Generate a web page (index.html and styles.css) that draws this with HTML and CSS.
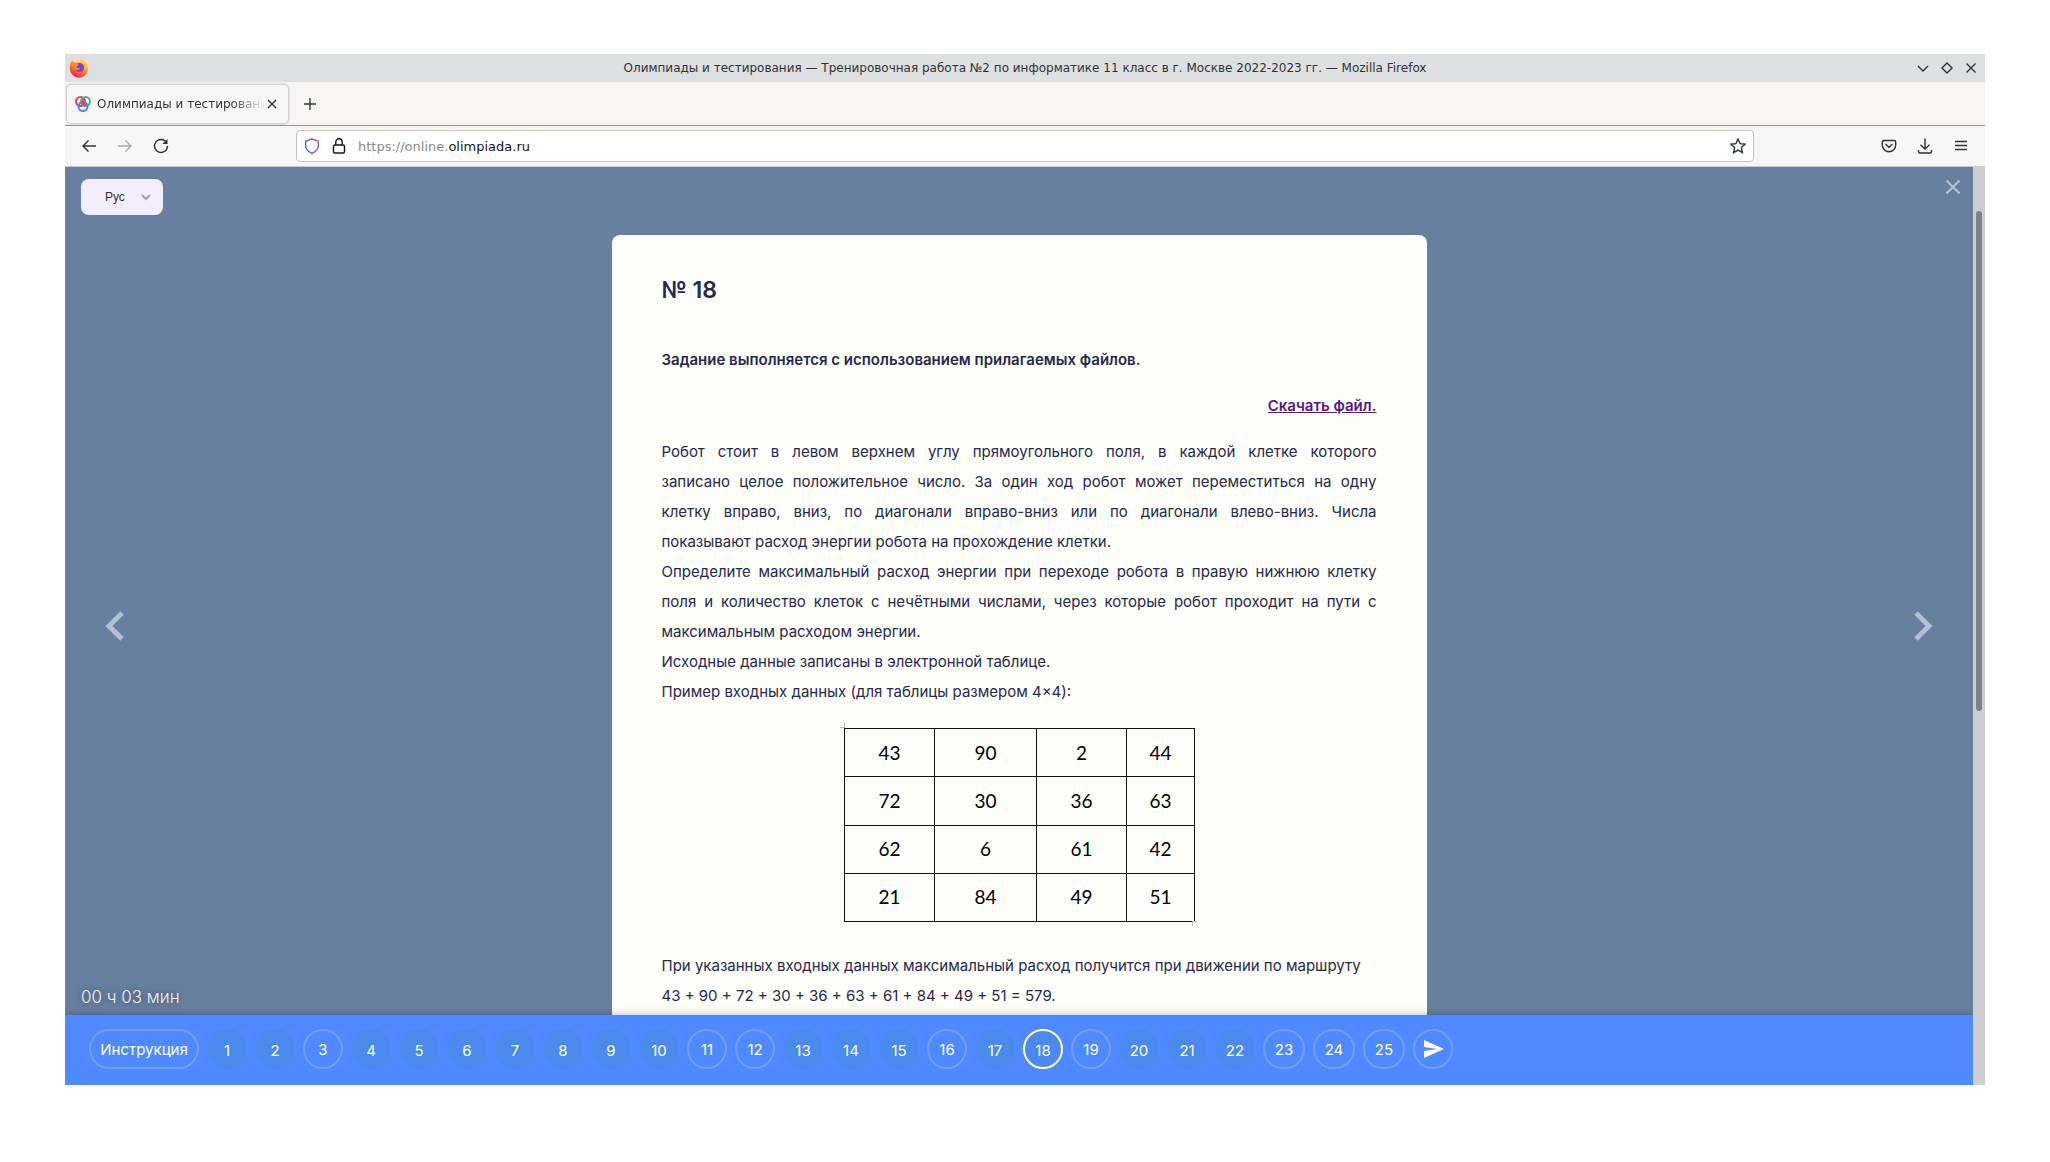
FILE: index.html
```html
<!DOCTYPE html>
<html lang="ru">
<head>
<meta charset="utf-8">
<title>Олимпиады и тестирования</title>
<link rel="stylesheet" href="styles.css">
</head>
<body>
<div class="window">
  <header class="titlebar">
    <svg class="firefox" viewBox="0 0 20 20" width="20" height="20" aria-hidden="true">
      <defs>
        <linearGradient id="flame" x1="0.8" y1="0" x2="0.3" y2="1">
          <stop offset="0" stop-color="#fff04a"/><stop offset="0.35" stop-color="#ffb52b"/>
          <stop offset="0.65" stop-color="#ff6a2b"/><stop offset="1" stop-color="#f0146a"/>
        </linearGradient>
      </defs>
      <path fill="url(#flame)" d="M2.600 3C1 5 .8 8 .8 10.500A9.200 9.200 0 0 0 19.200 10.500C19.200 7 17.500 4.500 15.500 3.500C15.500 2 13.500.8 12.500 0C11 1.500 11.500 3.500 10 4.500L5.500 4.300C4.500 4 3.800 2.800 3.600 1.800Z"/>
      <circle cx="10.500" cy="9.500" r="4.600" fill="#7a3fe0"/>
      <path fill="#ff8a24" d="M2.500 4C4 6 6 5 9.500 6.500C9.500 8 7.500 8 7.200 9.500C8.500 10 10 9.800 11 10.500C10 12.500 7 12.500 5.500 11C3.500 9 2.800 7 2.500 4Z"/>
    </svg>
    <div class="titlebar-text">Олимпиады и тестирования — Тренировочная работа №2 по информатике 11 класс в г. Москве 2022-2023 гг. — Mozilla Firefox</div>
    <div class="window-controls">
      <button class="icon-button" aria-label="Свернуть"><svg viewBox="0 0 12 12" width="12" height="12"><path d="M1 4l5 5 5-5"/></svg></button>
      <button class="icon-button" aria-label="Развернуть"><svg viewBox="0 0 12 12" width="12" height="12"><path d="M6 1l5 5-5 5-5-5z"/></svg></button>
      <button class="icon-button" aria-label="Закрыть"><svg viewBox="0 0 12 12" width="12" height="12"><path d="M1.500 1.500l9 9M10.500 1.500l-9 9"/></svg></button>
    </div>
  </header>

  <div class="tabs">
    <div class="tab">
      <svg viewBox="0 0 16 16" width="16" height="16" aria-hidden="true" fill="none" stroke-width="2">
        <circle cx="5.500" cy="5.500" r="4.500" stroke="#e0455e"/>
        <circle cx="10.500" cy="5.500" r="4.500" stroke="#55b078"/>
        <circle cx="8" cy="10.500" r="4.500" stroke="#4b86e6"/>
        <path d="M8 3v5l3 1" stroke="#e0455e"/>
      </svg>
      <span class="tab-title">Олимпиады и тестирования</span>
      <button class="icon-button" aria-label="Закрыть вкладку"><svg viewBox="0 0 10 10" width="10" height="10"><path d="M1 1l8 8M9 1l-8 8"/></svg></button>
    </div>
    <button class="icon-button" aria-label="Новая вкладка"><svg viewBox="0 0 12 12" width="12" height="12"><path d="M6 0v12M0 6h12"/></svg></button>
  </div>

  <div class="toolbar">
    <div class="history">
      <button class="icon-button" aria-label="Назад"><svg viewBox="0 0 16 16" width="16" height="16"><path d="M15 8H2M7.500 2.500L2 8l5.500 5.500"/></svg></button>
      <button class="icon-button faded" aria-label="Вперёд"><svg viewBox="0 0 16 16" width="16" height="16"><path d="M1 8h13M8.500 2.500L14 8l-5.500 5.500"/></svg></button>
      <button class="icon-button" aria-label="Обновить"><svg viewBox="0 0 16 16" width="16" height="16"><path d="M13.500 4.500A6.500 6.500 0 1 0 14.500 8"/><path d="M14.500 1v5h-5z" class="solid"/></svg></button>
    </div>
    <div class="address">
      <svg viewBox="0 0 16 16" width="16" height="16" aria-hidden="true">
        <defs><linearGradient id="shield" x1="0" y1="1" x2="1" y2="0"><stop offset="0" stop-color="#3a5fd0"/><stop offset="1" stop-color="#9059ff"/></linearGradient></defs>
        <path d="M8 .8L14.300 3.300V8C14.300 11.500 11 14 8 15.300C5 14 1.700 11.500 1.700 8V3.300Z" stroke="url(#shield)"/>
      </svg>
      <svg viewBox="0 0 16 16" width="16" height="16" aria-hidden="true" class="lock"><rect x="2.500" y="7" width="11" height="8" rx="1.500"/><path d="M4.800 7V4a3.200 3.200 0 0 1 6.400 0v3"/></svg>
      <a class="url" href="#">https://online.<b>olimpiada.ru</b></a>
      <button class="icon-button" aria-label="Добавить в закладки"><svg viewBox="0 0 16 16" width="16" height="16"><path d="M8 1l2.100 4.600 5 .6-3.700 3.400 1 5L8 12.100 3.600 14.600l1-5L.9 6.200l5-.6z"/></svg></button>
    </div>
    <div class="tools">
      <button class="icon-button" aria-label="Сохранить"><svg viewBox="0 0 16 16" width="16" height="16"><path d="M3 2.500h10a1.700 1.700 0 0 1 1.700 1.700V7a6.700 6.700 0 0 1-13.400 0V4.200A1.700 1.700 0 0 1 3 2.500zM4.500 6L8 9.300 11.500 6"/></svg></button>
      <button class="icon-button" aria-label="Загрузки"><svg viewBox="0 0 16 16" width="16" height="16"><path d="M8 .5v10.500M3.500 6.800L8 11l4.500-4.200M1.500 12v1.500A1.500 1.500 0 0 0 3 15h10a1.500 1.500 0 0 0 1.500-1.500V12"/></svg></button>
      <button class="icon-button" aria-label="Меню"><svg viewBox="0 0 16 16" width="16" height="16"><path d="M2 3.500h12M2 7.500h12M2 11.500h12"/></svg></button>
    </div>
  </div>

  <div class="viewport">
    <div class="site">
      <div class="stage">
        <aside class="side">
          <label class="language">
            <select aria-label="Язык"><option>Рус</option></select>
            <svg viewBox="0 0 10 8" width="10" height="8" aria-hidden="true"><path d="M1 2l4 4 4-4"/></svg>
          </label>
          <div class="timer">00 ч 03 мин</div>
        </aside>

        <main class="card">
          <h1>№ 18</h1>
          <p class="note">Задание выполняется с использованием прилагаемых файлов.</p>
          <p class="download"><a href="#">Скачать файл.</a></p>
          <div class="statement">
            <p><span class="full-line">Робот стоит в левом верхнем углу прямоугольного поля, в каждой клетке которого</span>
              <span class="full-line">записано целое положительное число. За один ход робот может переместиться на одну</span>
              <span class="full-line">клетку вправо, вниз, по диагонали вправо-вниз или по диагонали влево-вниз. Числа</span>
              показывают расход энергии робота на прохождение клетки.</p>
            <p>Определите максимальный расход энергии при переходе робота в правую нижнюю клетку поля и количество клеток с нечётными числами, через которые робот проходит на пути с максимальным расходом энергии.</p>
            <p>Исходные данные записаны в электронной таблице.</p>
            <p>Пример входных данных (для таблицы размером 4×4):</p>
          </div>
          <div class="figure">
            <table class="grid">
              <colgroup><col class="c1"><col class="c2"><col class="c1"><col class="c4"></colgroup>
              <tbody>
                <tr><td>43</td><td>90</td><td>2</td><td>44</td></tr>
                <tr><td>72</td><td>30</td><td>36</td><td>63</td></tr>
                <tr><td>62</td><td>6</td><td>61</td><td>42</td></tr>
                <tr><td>21</td><td>84</td><td>49</td><td>51</td></tr>
              </tbody>
            </table>
          </div>
          <p class="answer">При указанных входных данных максимальный расход получится при движении по маршруту 43 + 90 + 72 + 30 + 36 + 63 + 61 + 84 + 49 + 51 = 579.</p>
        </main>

        <aside class="side side-right">
          <button class="close" aria-label="Закрыть"><svg viewBox="0 0 14 14" width="14" height="14"><path d="M.5.500l13 13M13.500.500l-13 13"/></svg></button>
        </aside>
      </div>

      <button class="arrow arrow-prev" aria-label="Предыдущее"><svg viewBox="0 0 20 30" width="20" height="30"><path d="M17 2L4 15l13 13"/></svg></button>
      <button class="arrow arrow-next" aria-label="Следующее"><svg viewBox="0 0 20 30" width="20" height="30"><path d="M3 2l13 13L3 28"/></svg></button>

      <nav class="tasks">
        <button class="task intro">Инструкция</button>
        <button class="task done">1</button>
        <button class="task done">2</button>
        <button class="task">3</button>
        <button class="task done">4</button>
        <button class="task done">5</button>
        <button class="task done">6</button>
        <button class="task done">7</button>
        <button class="task done">8</button>
        <button class="task done">9</button>
        <button class="task done">10</button>
        <button class="task">11</button>
        <button class="task">12</button>
        <button class="task done">13</button>
        <button class="task done">14</button>
        <button class="task done">15</button>
        <button class="task">16</button>
        <button class="task done">17</button>
        <button class="task done current">18</button>
        <button class="task">19</button>
        <button class="task done">20</button>
        <button class="task done">21</button>
        <button class="task done">22</button>
        <button class="task wide">23</button>
        <button class="task wide">24</button>
        <button class="task wide">25</button>
        <button class="task send" aria-label="Завершить"><svg viewBox="0 0 20 18" width="20" height="18"><path d="M0 0L20 9 0 18V11L13 9 0 7z"/></svg></button>
      </nav>
    </div>
    <div class="scrollbar"><div class="thumb"></div></div>
  </div>
</div>
</body>
</html>
```

FILE: styles.css
```css
* { box-sizing: border-box; }

body {
  margin: 0;
  padding: 54px 65px 77px;
  min-height: 100vh;
  display: flex;
  background: #fff;
  font-family: "DejaVu Sans", sans-serif;
}

button { padding: 0; border: 0; background: none; font: inherit; color: inherit; }
svg { display: block; flex: none; }

.window { flex: 1; min-width: 0; display: flex; flex-direction: column; color: #2e3436; }

.icon-button svg, .address > svg { fill: none; stroke: currentColor; stroke-width: 1.4; }
.icon-button .solid { fill: currentColor; stroke: none; }
.faded { color: #a8aaab; }

.titlebar {
  height: 28px;
  padding: 0 8px 0 4px;
  display: grid;
  grid-template-columns: 1fr auto 1fr;
  align-items: center;
  background: #dedfe1;
  font-size: 12px;
}
.titlebar-text { padding-left: 4px; }
.window-controls { display: flex; justify-content: flex-end; gap: 12px; }

.tabs {
  height: 44px;
  padding: 4px 2px 3px;
  display: flex;
  align-items: center;
  gap: 16px;
  background: #f6f5f4;
  border-bottom: 1px solid #929595;
}
.tab {
  width: 221px;
  height: 38px;
  padding: 0 11px 0 8px;
  display: flex;
  align-items: center;
  gap: 6px;
  background: #f6f6f6;
  border-radius: 4px;
  box-shadow: 0 0 3px #8a8a9a;
  font-size: 12px;
}
.tab-title {
  flex: 1;
  overflow: hidden;
  white-space: nowrap;
  margin-right: -4px;
  mask-image: linear-gradient(to right, #000 80%, transparent);
}

.toolbar {
  height: 41px;
  padding: 0 16px;
  display: flex;
  align-items: center;
  background: #f6f6f6;
  border-bottom: 1px solid #cdc7c2;
}
.history { width: 215px; display: flex; gap: 20px; }
.address {
  flex: 1;
  height: 32px;
  padding: 0 7px;
  display: flex;
  align-items: center;
  gap: 11px;
  background: #fff;
  border: 1px solid #c8c5bd;
  border-radius: 4px;
}
.lock { color: #15141a; }
.url { flex: 1; color: #8a8a8a; font-size: 13px; text-decoration: none; }
.url b { color: #15141a; font-weight: 400; }
.tools { width: 215px; display: flex; justify-content: flex-end; gap: 20px; }

.viewport { flex: 1; display: flex; }
.site {
  position: relative;
  flex: 1;
  overflow: hidden;
  display: flex;
  flex-direction: column;
  background: #6780a0;
  font-family: Inter, sans-serif;
}
.stage { flex: 1; display: grid; grid-template-columns: 1fr minmax(0, 815px) 1fr; }

.side { padding: 12px 16px 7px; display: flex; flex-direction: column; justify-content: space-between; align-items: flex-start; }
.side-right { align-items: flex-end; padding-right: 13px; }

.language {
  width: 82px;
  height: 36px;
  padding: 0 12px 0 24px;
  display: flex;
  align-items: center;
  justify-content: space-between;
  border-radius: 8px;
  background: #f1edfb;
}
.language select {
  appearance: none;
  padding: 0;
  border: 0;
  background: none;
  color: #333;
  font: 12px "Liberation Sans", sans-serif;
}
.language svg { fill: none; stroke: #a3a1ab; stroke-width: 2; }

.timer { color: #f0f0f0; font-size: 17px; font-weight: 300; line-height: 22px; text-shadow: 0 0 6px rgba(0, 0, 0, 0.5); }

.close svg { fill: none; stroke: #b5c2d2; stroke-width: 2; }
.close { margin-top: 1px; }

.arrow { position: absolute; top: 50%; transform: translateY(-50%); }
.arrow svg { fill: none; stroke: #b3c0d0; stroke-width: 5; }
.arrow-prev { left: 40px; }
.arrow-next { right: 40px; }

.card {
  margin-top: 68px;
  padding: 40px 50px 4px;
  background: #fdfefa;
  border-radius: 8px 8px 0 0;
  color: #26294a;
  font-size: 15px;
  line-height: 30px;
}
.card h1 { margin: 0 0 40px; font-size: 23px; font-weight: 600; line-height: 30px; }
.card p { margin: 0; }
.card .note { margin-bottom: 16px; font-weight: 600; }
.card .download { margin-bottom: 16px; font-weight: 600; text-align: right; }
.download a { color: #551a8b; }
.statement p { text-align: justify; }
.full-line { display: block; text-align-last: justify; }

.figure {
  position: relative;
  width: 350px;
  margin: 21px auto 29px;
}
/* Corner crop marks around the figure */
.figure::before, .figure::after { content: ""; position: absolute; width: 4px; height: 4px; }
.figure::before { top: -5px; left: -4px; border: solid #b5b5b5; border-width: 0 1px 1px 0; }
.figure::after { bottom: -4px; right: -3px; border: solid #b5b5b5; border-width: 1px 0 0 1px; }

.grid {
  width: 100%;
  height: 194px;
  table-layout: fixed;
  border-collapse: collapse;
  color: #000;
  font-family: Lato, sans-serif;
  font-size: 19px;
}
.grid td { padding: 0; border: 1px solid #111; text-align: center; }
.c1 { width: 90px; }
.c2 { width: 102px; }
.c4 { width: 68px; }

.tasks {
  height: 70px;
  padding: 0 24px 2px;
  display: flex;
  align-items: center;
  gap: 8px;
  background: #4e89ff;
  box-shadow: 0 0 8px rgba(0, 0, 0, 0.3);
}
.task {
  width: 40px;
  height: 40px;
  display: grid;
  place-items: center;
  border: 2px solid #709fff;
  border-radius: 20px;
  color: #fff;
  font-size: 15px;
  font-weight: 400;
}
.task.intro { width: 110px; }
.task.wide { width: 42px; }
.task.done { padding-top: 2px; border-color: #4a8aed; background: #4a8aed; }
.task.done.current { border-color: #fff; }
.task.send { padding-left: 2px; }
.task svg { fill: #fff; }

.scrollbar { width: 12px; padding: 44px 3px 0; background: #cdcdcd; }
.thumb { height: 500px; border-radius: 3px; background: #7d8182; }
```
